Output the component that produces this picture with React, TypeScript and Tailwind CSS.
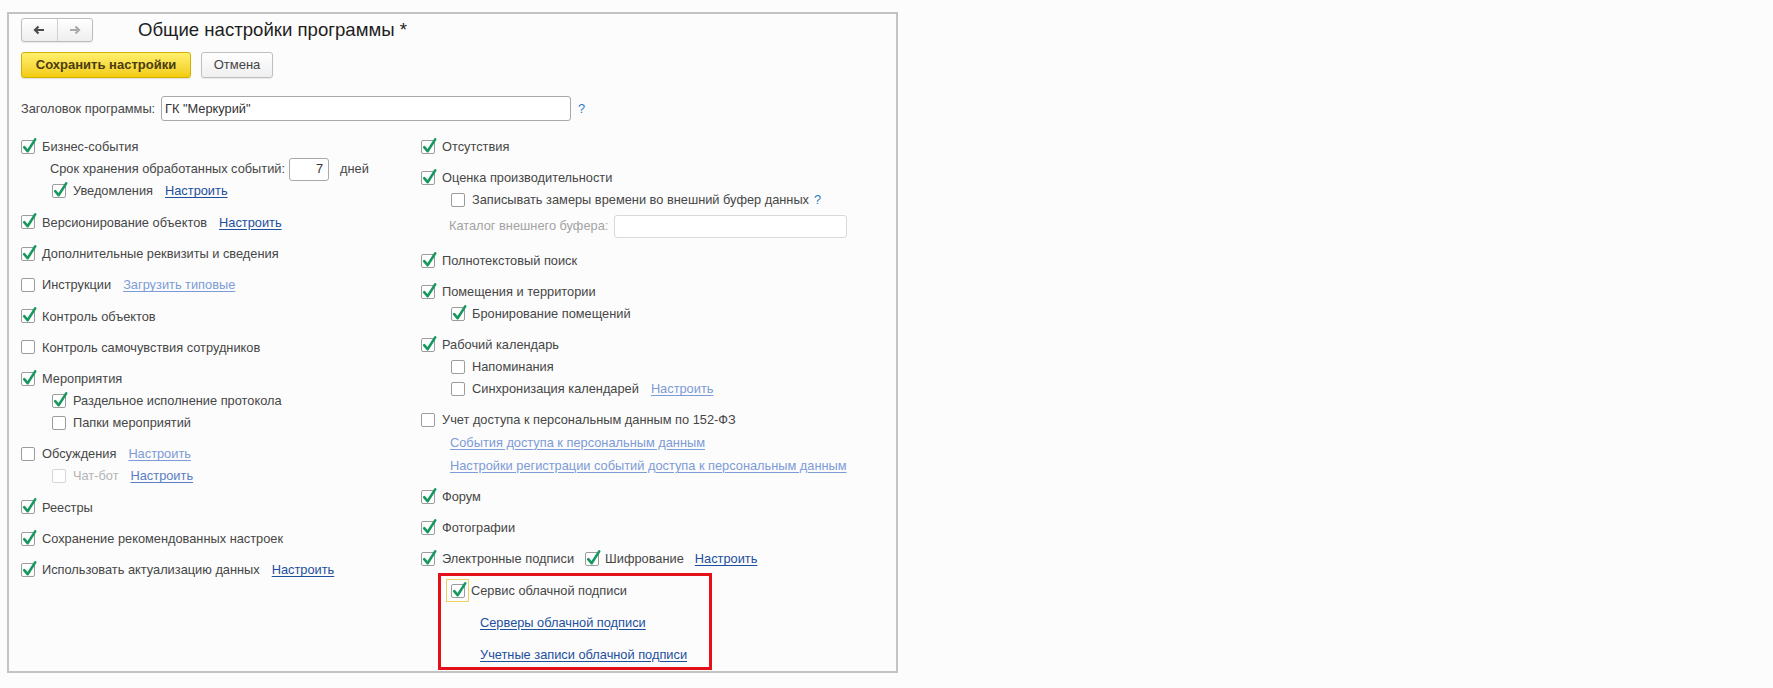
import type { ReactNode } from "react";

const FONT = "font-['Liberation_Sans',Arial,sans-serif]";

function Check({ checked = false, disabled = false }: { checked?: boolean; disabled?: boolean }) {
  return (
    <span
      className={`relative inline-block w-[14px] h-[14px] shrink-0 rounded-[2px] border bg-white ${
        disabled ? "border-[#d6d6d6]" : "border-[#9c9c9c]"
      }`}
    >
      {checked && (
        <svg className="absolute left-[-1px] top-[-1px] overflow-visible" width="16" height="16" viewBox="0 0 16 16">
          <path d="M3.2 7.2 L6.6 11.2 L14.2 -0.6" fill="none" stroke="#16985e" strokeWidth="2.6" strokeLinecap="round" strokeLinejoin="round" />
        </svg>
      )}
    </span>
  );
}

type Tone = "dark" | "light" | "mid";

function Link({ children, tone = "dark", className = "" }: { children: ReactNode; tone?: Tone; className?: string }) {
  const color =
    tone === "light"
      ? "text-[#7d9bd6] decoration-[#7d9bd6]"
      : tone === "mid"
      ? "text-[#5a7ec4] decoration-[#5a7ec4]"
      : "text-[#1d4f9e] decoration-[#1d4f9e]";
  return <a className={`underline underline-offset-2 cursor-pointer whitespace-nowrap ${color} ${className}`}>{children}</a>;
}

function Row({
  label,
  checked,
  disabled,
  indent = 0,
  link,
  tone,
  children,
}: {
  label: string;
  checked?: boolean;
  disabled?: boolean;
  indent?: number;
  link?: string;
  tone?: Tone;
  children?: ReactNode;
}) {
  return (
    <div className={`h-[22px] flex items-center ${indent === 1 ? "pl-[31px]" : indent === 2 ? "pl-[30px]" : ""}`}>
      <Check checked={checked} disabled={disabled} />
      <span className={`ml-[7px] whitespace-nowrap ${disabled ? "text-[#b5b5b5]" : ""}`}>{label}</span>
      {link && (
        <Link tone={tone} className="ml-[12px]">
          {link}
        </Link>
      )}
      {children}
    </div>
  );
}

function NavButtons() {
  return (
    <div className="flex w-[72px] h-[24px] rounded-[3px] border border-[#bdbdbd] bg-gradient-to-b from-white to-[#eeeeee] shadow-[0_1px_1px_rgba(0,0,0,0.08)]">
      <div className="flex-1 flex items-center justify-center border-r border-[#d0d0d0]">
        <svg width="12" height="10" viewBox="0 0 12 10">
          <path d="M11 5 H2 M5.5 1.5 L2 5 L5.5 8.5" fill="none" stroke="#4d4d4d" strokeWidth="2.2" />
        </svg>
      </div>
      <div className="flex-1 flex items-center justify-center">
        <svg width="12" height="10" viewBox="0 0 12 10">
          <path d="M1 5 H10 M6.5 1.5 L10 5 L6.5 8.5" fill="none" stroke="#ababab" strokeWidth="2.2" />
        </svg>
      </div>
    </div>
  );
}

export default function App() {
  return (
    <div className={`w-[1773px] h-[688px] bg-[#fcfcfc] pt-[12px] pl-[7px] text-[12.8px] text-[#464646] ${FONT}`}>
      <div className="w-[891px] h-[661px] border-2 border-[#c3c3c3] bg-[#fcfcfc] pl-[12px] pt-[4px]">
        {/* header */}
        <div className="flex items-center h-[24px]">
          <NavButtons />
          <h1 className="ml-[45px] text-[18.6px] text-[#1e1e1e] leading-none">Общие настройки программы *</h1>
        </div>

        <div className="mt-[10px] flex gap-[10px]">
          <button className="w-[170px] h-[26px] rounded-[3px] border border-[#d4b000] bg-gradient-to-b from-[#fff06a] to-[#f2cc00] font-bold text-[13px] text-[#4a3c0e] shadow-[0_1px_1px_rgba(0,0,0,0.12)]">
            Сохранить настройки
          </button>
          <button className="w-[72px] h-[26px] rounded-[3px] border border-[#bfbfbf] bg-gradient-to-b from-white to-[#efefef] text-[13px] text-[#444444] shadow-[0_1px_1px_rgba(0,0,0,0.08)]">
            Отмена
          </button>
        </div>

        <div className="mt-[18px] h-[25px] flex items-center">
          <span className="w-[140px] whitespace-nowrap">Заголовок программы:</span>
          <div className="w-[410px] h-[25px] rounded-[3px] border border-[#a9a9a9] bg-white flex items-center pl-[3px] text-[#333333]">
            ГК "Меркурий"
          </div>
          <span className="ml-[7px] text-[#2a7bc6]">?</span>
        </div>

        {/* columns */}
        <div className="mt-[15px] flex">
          <div className="w-[400px] flex flex-col gap-[9.3px]">
            <div>
              <Row label="Бизнес-события" checked />
              <div className="h-[22px] flex items-center pl-[29px]">
                <span className="w-[239px] whitespace-nowrap">Срок хранения обработанных событий:</span>
                <div className="w-[40px] h-[23px] rounded-[3px] border border-[#a9a9a9] bg-white flex items-center justify-end pr-[5px] text-[#333333]">
                  7
                </div>
                <span className="ml-[11px]">дней</span>
              </div>
              <Row label="Уведомления" checked indent={1} link="Настроить" />
            </div>
            <Row label="Версионирование объектов" checked link="Настроить" />
            <Row label="Дополнительные реквизиты и сведения" checked />
            <Row label="Инструкции" link="Загрузить типовые" tone="light" />
            <Row label="Контроль объектов" checked />
            <Row label="Контроль самочувствия сотрудников" />
            <div>
              <Row label="Мероприятия" checked />
              <Row label="Раздельное исполнение протокола" checked indent={1} />
              <Row label="Папки мероприятий" indent={1} />
            </div>
            <div>
              <Row label="Обсуждения" link="Настроить" tone="light" />
              <Row label="Чат-бот" disabled indent={1} link="Настроить" tone="mid" />
            </div>
            <Row label="Реестры" checked />
            <Row label="Сохранение рекомендованных настроек" checked />
            <Row label="Использовать актуализацию данных" checked link="Настроить" />
          </div>

          <div className="flex-1 flex flex-col gap-[9px]">
            <Row label="Отсутствия" checked />
            <div>
              <Row label="Оценка производительности" checked />
              <Row label="Записывать замеры времени во внешний буфер данных" indent={2}>
                <span className="ml-[5px] text-[#2a7bc6]">?</span>
              </Row>
              <div className="h-[30px] flex items-center pl-[28px]">
                <span className="w-[165px] whitespace-nowrap text-[#a3a3a3]">Каталог внешнего буфера:</span>
                <div className="w-[233px] h-[23px] rounded-[3px] border border-[#d9d9d9] bg-white" />
              </div>
            </div>
            <Row label="Полнотекстовый поиск" checked />
            <div>
              <Row label="Помещения и территории" checked />
              <Row label="Бронирование помещений" checked indent={2} />
            </div>
            <div>
              <Row label="Рабочий календарь" checked />
              <Row label="Напоминания" indent={2} />
              <Row label="Синхронизация календарей" indent={2} link="Настроить" tone="light" />
            </div>
            <div>
              <Row label="Учет доступа к персональным данным по 152-ФЗ" />
              <div className="h-[23px] flex items-center pl-[29px]">
                <Link tone="light">События доступа к персональным данным</Link>
              </div>
              <div className="h-[23px] flex items-center pl-[29px]">
                <Link tone="light">Настройки регистрации событий доступа к персональным данным</Link>
              </div>
            </div>
            <Row label="Форум" checked />
            <Row label="Фотографии" checked />
            <div>
              <div className="h-[22px] flex items-center">
                <Check checked />
                <span className="ml-[7px] whitespace-nowrap">Электронные подписи</span>
                <span className="ml-[11px] flex items-center">
                  <Check checked />
                  <span className="ml-[6px] whitespace-nowrap">Шифрование</span>
                </span>
                <Link className="ml-[11px]">Настроить</Link>
              </div>
              <div className="mt-[2.6px] ml-[17px] w-[274px] h-[97px] border-[3px] border-[#e3101a] pt-[4px] pl-[5px]">
                <div className="h-[22px] flex items-center">
                  <span className="w-[23px] h-[23px] border border-[#f0d060] flex items-center justify-center">
                    <Check checked />
                  </span>
                  <span className="ml-[2px] whitespace-nowrap">Сервис облачной подписи</span>
                </div>
                <div className="mt-[10px] h-[22px] flex items-center pl-[34px]">
                  <Link>Серверы облачной подписи</Link>
                </div>
                <div className="mt-[10px] h-[22px] flex items-center pl-[34px]">
                  <Link>Учетные записи облачной подписи</Link>
                </div>
              </div>
            </div>
          </div>
        </div>
      </div>
    </div>
  );
}
